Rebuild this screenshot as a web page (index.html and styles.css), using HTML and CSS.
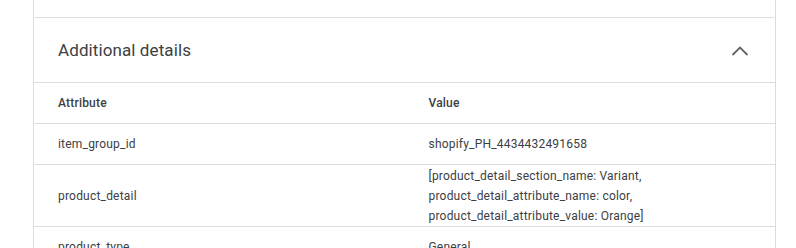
FILE: index.html
```html
<!DOCTYPE html>
<html lang="en">
<head>
    <meta charset="UTF-8">
    <title>Product details</title>
    <link rel="stylesheet" href="styles.css">
</head>
<body>
    <div class="page">
        <div class="panel">
            <!-- tail of the previous section -->
            <div class="prev-section"></div>

            <div class="details">
                <div class="details-header">
                    <span class="details-title">Additional details</span>
                    <svg class="chevron" width="24" height="24" viewBox="0 0 24 24">
                        <polyline points="4.5,16 12,8.5 19.5,16" fill="none" stroke="#5f6368" stroke-width="1.8"/>
                    </svg>
                </div>

                <div class="row head">
                    <div class="cell">Attribute</div>
                    <div class="cell">Value</div>
                </div>
                <div class="row">
                    <div class="cell">item_group_id</div>
                    <div class="cell">shopify_PH_4434432491658</div>
                </div>
                <div class="row tall">
                    <div class="cell">product_detail</div>
                    <div class="cell">[product_detail_section_name: Variant,<br>product_detail_attribute_name: color,<br>product_detail_attribute_value: Orange]</div>
                </div>
                <div class="row">
                    <div class="cell">product_type</div>
                    <div class="cell">General</div>
                </div>
            </div>
        </div>
    </div>
</body>
</html>
```

FILE: styles.css
```css
* {
    margin: 0;
    padding: 0;
    box-sizing: border-box;
}

body {
    font-family: Roboto, 'Liberation Sans', sans-serif;
    background: white;
    height: 248px;
    overflow: hidden;
}

.page {
    padding-left: 33px;
    width: 776px;
}

.panel {
    border-left: 1px solid #dadce0;
    border-right: 1px solid #dadce0;
    min-height: 300px;
}

.prev-section {
    height: 17px;
}

.details {
    border-top: 1px solid #dadce0;
    border-radius: 2px 2px 0 0;
}

.details-header {
    height: 65px;
    padding: 0 23px 0 24px;
    display: flex;
    justify-content: space-between;
    align-items: center;
    border-bottom: 1px solid #dadce0;
}

.details-title {
    font-size: 17px;
    color: #3c4043;
    letter-spacing: 0.1px;
}

.chevron {
    margin-top: 1px;
}

.row {
    display: grid;
    grid-template-columns: 1fr 1fr;
    min-height: 41px;
    border-bottom: 1px solid #dadce0;
}

.row.tall {
    min-height: 62px;
}

.cell {
    display: flex;
    align-items: center;
    padding: 0 24px;
    font-size: 12px;
    line-height: 20px;
    color: #3c4043;
    letter-spacing: 0.2px;
}

.head .cell {
    font-weight: 500;
    color: #3c4043;
}
```
